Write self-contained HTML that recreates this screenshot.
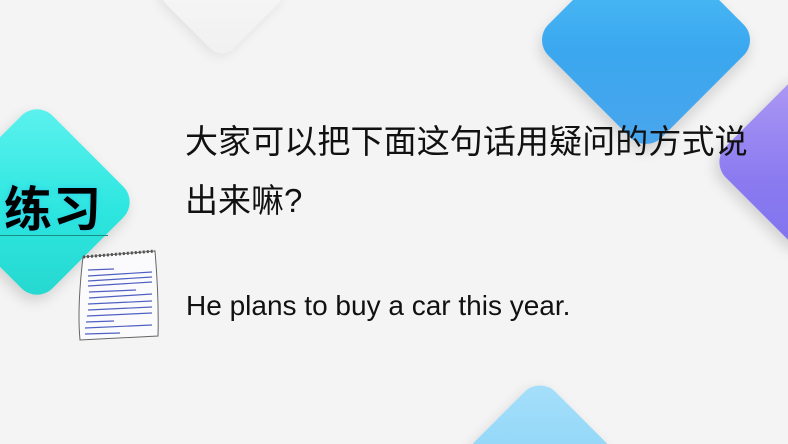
<!DOCTYPE html>
<html><head><meta charset="utf-8"><style>
html,body{margin:0;padding:0;width:788px;height:444px;overflow:hidden}
body{background:#f4f4f4;font-family:"Liberation Sans","Noto Sans CJK SC",sans-serif}
#w{position:relative;width:788px;height:444px;overflow:hidden}
.d{position:absolute;transform:rotate(45deg);border-radius:22px}
.t{position:absolute;color:#111;white-space:nowrap}
</style></head><body><div id="w">
<div class="d" style="left:174px;top:-56px;width:96px;height:96px;background:linear-gradient(135deg,#fbfbfb,#f0f0f0);box-shadow:0 4px 12px rgba(0,0,0,.08);border-radius:16px"></div>
<div class="d" style="left:566px;top:-40px;width:160px;height:160px;background:linear-gradient(135deg,#56c8f8,#3aa7ef 55%,#4ba6ec);box-shadow:4px 6px 14px rgba(0,0,0,.15)"></div>
<div class="d" style="left:738px;top:95px;width:134px;height:134px;background:linear-gradient(135deg,#b19cf4,#8a7af0 60%,#7f74ee);box-shadow:0 6px 14px rgba(0,0,0,.15)"></div>
<div class="d" style="left:-35px;top:130px;width:144px;height:144px;background:linear-gradient(135deg,#5ff2ef,#2de6df 55%,#25d7cf);box-shadow:2px 6px 14px rgba(0,0,0,.15)"></div>
<div class="d" style="left:483px;top:400px;width:114px;height:114px;background:linear-gradient(135deg,#a7e0fb,#7ccdf5);box-shadow:0 4px 12px rgba(0,0,0,.1)"></div>
<div style="position:absolute;left:0;top:235px;width:108px;height:1px;background:#1a8c86"></div>
<div class="t" style="left:4px;top:170px;font-size:48px;font-weight:bold;color:#000;letter-spacing:1px;text-shadow:0 0 4px #2fd8e8,0 0 6px #2fd8e8">练习</div>
<svg style="position:absolute;left:74px;top:248px" width="90" height="94" viewBox="0 0 90 94">
<path d="M9 9 L81 3 Q85 50 84 88 L6 92 Q3 60 9 9Z" fill="#fbfbfd" stroke="#666" stroke-width="1"/>
<path d="M9 9 L81 3" stroke="#555" stroke-width="3" stroke-dasharray="2 2"/>
<g stroke="#5060c0" stroke-width="1.2">
<line x1="14" y1="22" x2="40" y2="21"/><line x1="14" y1="28" x2="78" y2="24"/><line x1="14" y1="33" x2="78" y2="29"/><line x1="14" y1="38" x2="78" y2="34"/><line x1="15" y1="44" x2="62" y2="42"/><line x1="15" y1="50" x2="78" y2="46"/><line x1="14" y1="56" x2="78" y2="53"/><line x1="14" y1="62" x2="78" y2="59"/><line x1="13" y1="68" x2="78" y2="65"/><line x1="12" y1="74" x2="40" y2="73"/><line x1="11" y1="80" x2="78" y2="77"/><line x1="11" y1="86" x2="46" y2="85"/>
</g></svg>
<div class="t" style="left:185px;top:120px;font-size:33px;line-height:44px;letter-spacing:0.1px">大家可以把下面这句话用疑问的方式说</div>
<div class="t" style="left:185px;top:179px;font-size:33px;line-height:44px">出来嘛?</div>
<div class="t" style="left:186px;top:287px;font-size:28px;line-height:38px">He plans to buy a car this year.</div>
</div></body></html>
